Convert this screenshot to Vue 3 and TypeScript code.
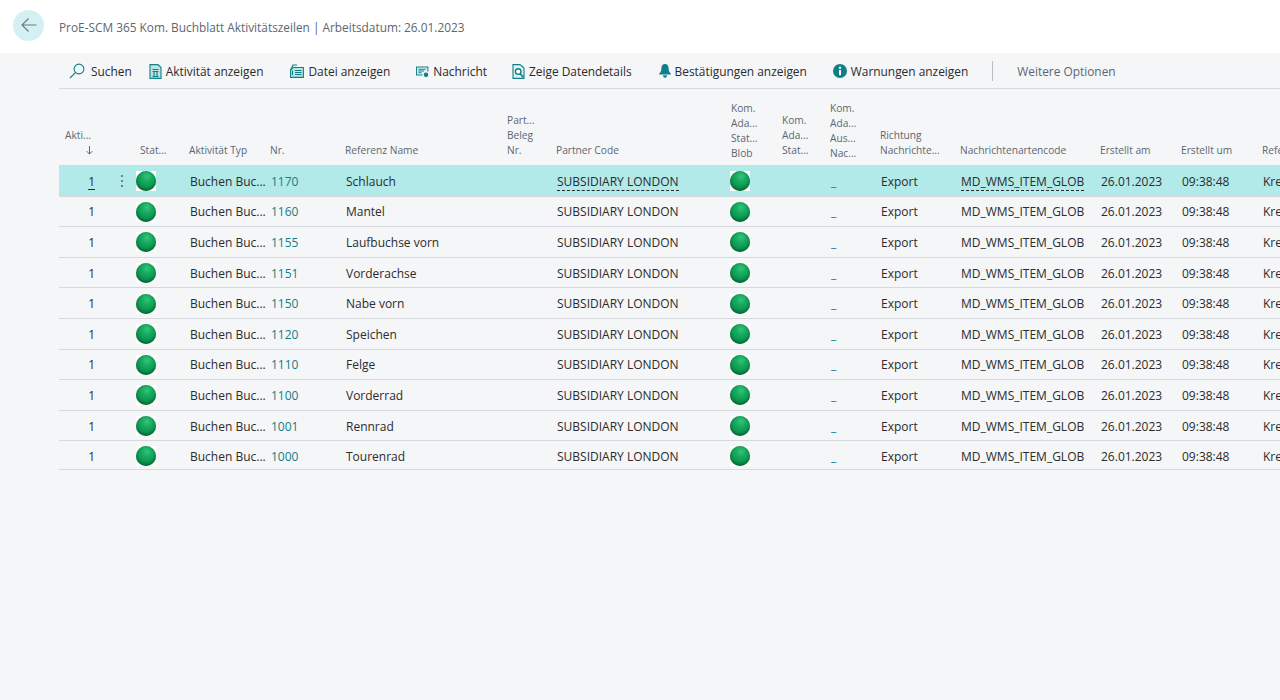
<template>
  <div class="page">
    <header class="page-header">
      <button class="back-button" type="button" aria-label="Zurück">
        <svg width="16" height="16" viewBox="0 0 16 16" fill="none" stroke="#6b7680" stroke-width="1.1">
          <path d="M15.5 8H1M7.5 1.5 1 8l6.5 6.5" />
        </svg>
      </button>
      <h1 class="page-title">ProE-SCM 365 Kom. Buchblatt Aktivitätszeilen | Arbeitsdatum: 26.01.2023</h1>
    </header>

    <nav class="toolbar">
      <span class="tool tool--search">
        <svg width="16" height="16" viewBox="0 0 16 16" fill="none" stroke="#0f7f88" stroke-width="1.1">
          <circle cx="10" cy="6" r="4.9" />
          <path d="M6.4 9.6 1 15" />
        </svg>
        Suchen
      </span>
      <span class="tool tool--activity">
        <svg width="13" height="15" viewBox="0 0 13 15" fill="#bfe3e5" stroke="#0f7f88" stroke-width="1.1">
          <path d="M1 .6h8l3 3v10.8H1z" />
          <path d="M3.5 5.5h6M3.5 7.5h6M5 7.5v5M8 7.5v5M3.5 12.5h6" fill="none" />
        </svg>
        Aktivität anzeigen
      </span>
      <span class="tool">
        <svg width="14" height="14" viewBox="0 0 14 14" fill="#bfe3e5" stroke="#0f7f88" stroke-width="1.1">
          <path d="M3 3.5h10.4v9.9H.6V6z" />
          <path d="M.6 6 3 1h4" fill="none" />
          <path d="M5 6.5h6.5M5 8.5h6.5M5 10.5h6.5M2.5 6.5v4.5" fill="none" />
        </svg>
        Datei anzeigen
      </span>
      <span class="tool tool--message">
        <svg width="13" height="14" viewBox="0 0 14 14" fill="none" stroke="#0f7f88" stroke-width="1.1">
          <path d="M7 11.4H.6V2.6h12.2v5" fill="#e3f3f4" />
          <path d="M2.5 5h8M2.5 7h6M2.5 9h3.5" />
          <circle cx="10.8" cy="11" r="1.9" fill="#0f7f88" />
        </svg>
        Nachricht
      </span>
      <span class="tool tool--details">
        <svg width="13" height="15" viewBox="0 0 13 15" fill="none" stroke="#0f7f88" stroke-width="1.1">
          <path d="M8 .6H1v13.8h11V4z" fill="#e3f3f4" />
          <circle cx="6.2" cy="7.6" r="2.8" fill="#fff" stroke-width="1.4" />
          <path d="m8.2 9.8 3.2 3.6" stroke-width="1.6" />
        </svg>
        Zeige Datendetails
      </span>
      <span class="tool tool--bell">
        <svg width="12" height="14" viewBox="0 0 12 14" fill="#0f7f88">
          <path d="M6 0c2.4 0 3.6 1.8 3.6 4.2 0 2.6.6 4 2.2 5.2v1.1H.2V9.4c1.6-1.2 2.2-2.6 2.2-5.2C2.4 1.8 3.6 0 6 0z" />
          <path d="M4 11.3h4c0 1.4-.8 2.4-2 2.4s-2-1-2-2.4z" />
        </svg>
        Bestätigungen anzeigen
      </span>
      <span class="tool tool--info">
        <svg width="14" height="14" viewBox="0 0 14 14">
          <circle cx="7" cy="7" r="7" fill="#0f7f88" />
          <circle cx="7" cy="3.8" r="1.2" fill="#fff" />
          <rect x="6" y="6" width="2" height="5.2" fill="#fff" />
        </svg>
        Warnungen anzeigen
      </span>
      <span class="divider"></span>
      <span class="more">Weitere Optionen</span>
    </nav>

    <div class="list">
      <div class="list-row list-head">
        <div
          v-for="col in columns"
          :key="col.key"
          class="head-cell"
          :class="[`head-cell--${col.key}`, { 'head-cell--tall': col.lines.length === 4 }]"
        >
          <span v-for="line in col.lines" :key="line">{{ line }}</span>
          <svg v-if="col.key === 'aktiv'" class="sort-arrow" width="7" height="9" viewBox="0 0 7 9" fill="none" stroke="#5f6a75">
            <path d="M3.5 0v8M.7 5.2l2.8 2.9 2.8-2.9" />
          </svg>
        </div>
      </div>

      <div
        v-for="(row, index) in rows"
        :key="row.nr"
        class="list-row body-row"
        :class="{ 'body-row--active': index === 0 }"
      >
        <div class="cell cell--aktiv"><span class="qty">1</span></div>
        <div class="cell cell--dots"><span v-if="index === 0" class="dots"><i></i><i></i><i></i></span></div>
        <div class="cell cell--status"><span class="ball-box"><span class="ball"></span></span></div>
        <div class="cell cell--text">Buchen Buc...</div>
        <div class="cell cell--text link">{{ row.nr }}</div>
        <div class="cell cell--text">{{ row.name }}</div>
        <div class="cell"></div>
        <div class="cell cell--text"><span class="focus-text">SUBSIDIARY LONDON</span></div>
        <div class="cell cell--blob"><span class="ball-box"><span class="ball"></span></span></div>
        <div class="cell"></div>
        <div class="cell cell--text link">_</div>
        <div class="cell cell--text">Export</div>
        <div class="cell cell--text"><span class="focus-text">MD_WMS_ITEM_GLOB</span></div>
        <div class="cell cell--text">26.01.2023</div>
        <div class="cell cell--text">09:38:48</div>
        <div class="cell cell--text cell--clip">Kre</div>
      </div>
    </div>
  </div>
</template>

<script setup lang="ts">
interface Column {
  key: string
  lines: string[]
}

const columns: Column[] = [
  { key: 'aktiv', lines: ['Akti...'] },
  { key: 'dots', lines: [] },
  { key: 'status', lines: ['Stat...'] },
  { key: 'typ', lines: ['Aktivität Typ'] },
  { key: 'nr', lines: ['Nr.'] },
  { key: 'name', lines: ['Referenz Name'] },
  { key: 'beleg', lines: ['Part...', 'Beleg', 'Nr.'] },
  { key: 'partner', lines: ['Partner Code'] },
  { key: 'blob', lines: ['Kom.', 'Ada...', 'Stat...', 'Blob'] },
  { key: 'adastat', lines: ['Kom.', 'Ada...', 'Stat...'] },
  { key: 'aus', lines: ['Kom.', 'Ada...', 'Aus...', 'Nac...'] },
  { key: 'richtung', lines: ['Richtung', 'Nachrichte...'] },
  { key: 'code', lines: ['Nachrichtenartencode'] },
  { key: 'am', lines: ['Erstellt am'] },
  { key: 'um', lines: ['Erstellt um'] },
  { key: 'ref', lines: ['Refe'] }
]

const rows = [
  { nr: '1170', name: 'Schlauch' },
  { nr: '1160', name: 'Mantel' },
  { nr: '1155', name: 'Laufbuchse vorn' },
  { nr: '1151', name: 'Vorderachse' },
  { nr: '1150', name: 'Nabe vorn' },
  { nr: '1120', name: 'Speichen' },
  { nr: '1110', name: 'Felge' },
  { nr: '1100', name: 'Vorderrad' },
  { nr: '1001', name: 'Rennrad' },
  { nr: '1000', name: 'Tourenrad' }
]
</script>

<style>
html,
body {
  margin: 0;
  background: #f5f6f8;
  overflow: hidden;
}
</style>

<style scoped>
.page {
  height: 700px;
  background: #f5f6f8;
  font-family: "Open Sans", "Liberation Sans", sans-serif;
  color: #2b2b2b;
  overflow: hidden;
}

.page-header {
  display: flex;
  align-items: center;
  gap: 15px;
  height: 53px;
  padding: 0 0 3px 13px;
  box-sizing: border-box;
  background: #fff;
}

.back-button {
  display: flex;
  align-items: center;
  justify-content: center;
  width: 31px;
  height: 31px;
  padding: 0;
  border: 0;
  border-radius: 50%;
  background: #d5f0f3;
}

.page-title {
  margin: 3px 0 0;
  font-size: 11.85px;
  font-weight: 400;
  color: #5d6670;
}

.toolbar {
  display: flex;
  align-items: center;
  height: 36px;
  margin-left: 59px;
  padding: 1px 0 0 10px;
  border-bottom: 1px solid #d5d8dc;
  box-sizing: border-box;
  font-size: 11.9px;
}

.tool {
  display: flex;
  align-items: center;
  gap: 4px;
  margin-right: 26px;
  white-space: nowrap;
}

.tool--search {
  gap: 6px;
  margin-right: 17px;
}

.tool--activity {
  margin-right: 27px;
}

.tool--message {
  margin-right: 25px;
}

.tool--details {
  margin-right: 27px;
}

.tool--bell {
  margin-right: 26px;
}

.tool--info {
  margin-right: 24px;
}

.divider {
  width: 1px;
  height: 20px;
  background: #b9bdc2;
  margin-right: 24px;
}

.more {
  color: #5d6670;
}

.list {
  margin-left: 59px;
}

.list-row {
  display: grid;
  grid-template-columns: 53px 22px 53px 81px 75px 162px 49px 175px 51px 48px 50px 80px 140px 81px 81px 20px;
}

.list-head {
  height: 76px;
  align-items: end;
  padding-bottom: 7px;
  box-sizing: border-box;
  font-size: 10.2px;
  line-height: 15px;
  color: #5d6670;
}

.head-cell {
  display: flex;
  flex-direction: column;
  padding-left: 2px;
  white-space: nowrap;
  overflow: hidden;
}

.head-cell--tall {
  margin-bottom: -3px;
}

.head-cell--aktiv {
  padding-left: 6px;
}

.head-cell--status {
  padding-left: 6px;
}

.sort-arrow {
  margin: 3px 0 3px 21px;
}

.body-row {
  height: 30.6px;
  padding-top: 1px;
  border-top: 1px solid #d5d8dc;
  box-sizing: border-box;
  font-size: 12px;
  align-items: center;
}

.body-row:last-child {
  border-bottom: 1px solid #d5d8dc;
  height: 30px;
  padding-top: 2px;
}

.body-row--active {
  background: #b2e9e9;
}

.cell {
  white-space: nowrap;
  min-width: 0;
}

.cell--text {
  padding-left: 3px;
}

.cell--clip {
  overflow: hidden;
}

.cell--aktiv {
  text-align: right;
  padding-right: 17px;
}

.cell--dots {
  display: flex;
  justify-content: center;
  padding-right: 2px;
}

.dots {
  display: flex;
  flex-direction: column;
  gap: 3px;
}

.dots i {
  width: 2px;
  height: 2px;
  border-radius: 50%;
  background: #55606b;
}

.cell--status {
  padding-left: 2px;
}

.cell--blob {
  padding-left: 1px;
}

.ball-box {
  display: flex;
  width: 20px;
  height: 20px;
  background: #fff;
}

.ball {
  width: 20px;
  height: 20px;
  border-radius: 50%;
  background: radial-gradient(circle at 55% 28%, #35c47c 0%, #16aa5e 30%, #0b9650 60%, #097f42 85%, #0a6a38 100%);
  box-shadow: inset 0 -2px 3px rgba(0, 70, 35, 0.45), inset 0 0 1px rgba(0, 60, 30, 0.5);
}

.link {
  color: #0f7f88;
}

.body-row--active .qty {
  text-decoration: underline;
  text-underline-offset: 3px;
}

.body-row--active .focus-text {
  border-bottom: 1px dashed #2b2b2b;
}
</style>
